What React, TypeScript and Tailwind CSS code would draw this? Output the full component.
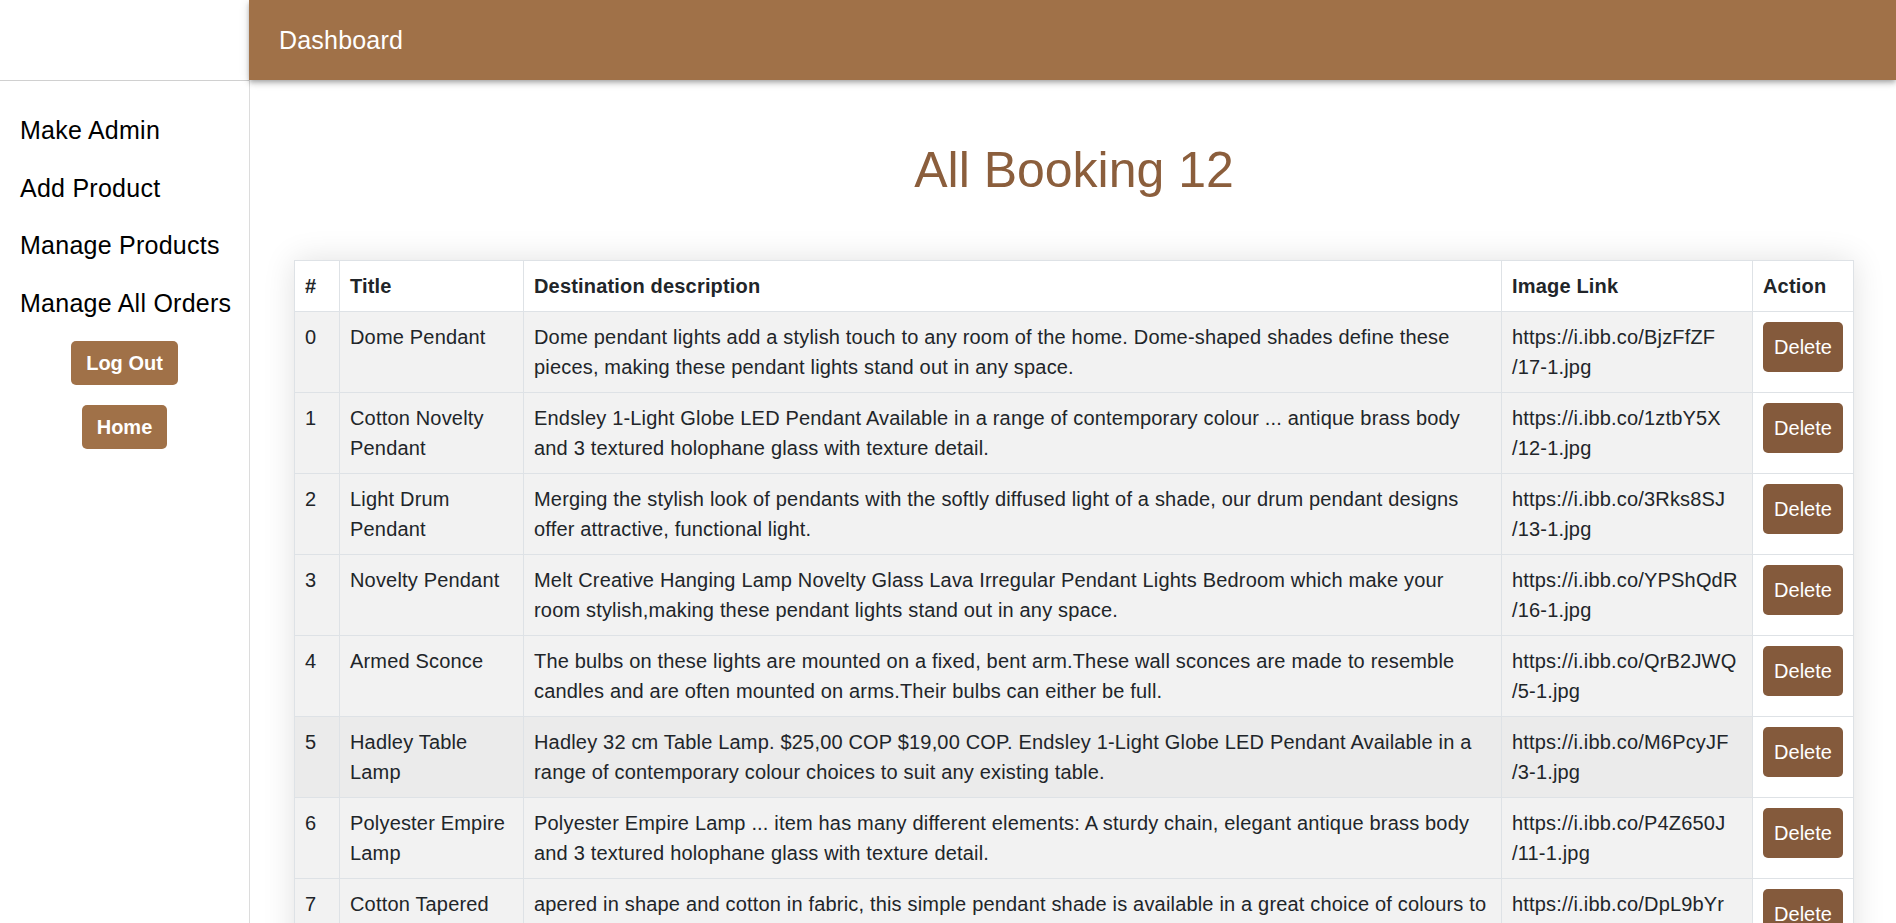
import React from 'react';

type Booking = {
  title: string;
  description: string;
  link: [string, string];
};

const bookings: Booking[] = [
  {
    title: 'Dome Pendant',
    description:
      'Dome pendant lights add a stylish touch to any room of the home. Dome-shaped shades define these pieces, making these pendant lights stand out in any space.',
    link: ['https://i.ibb.co/BjzFfZF', '/17-1.jpg'],
  },
  {
    title: 'Cotton Novelty Pendant',
    description:
      'Endsley 1-Light Globe LED Pendant Available in a range of contemporary colour ... antique brass body and 3 textured holophane glass with texture detail.',
    link: ['https://i.ibb.co/1ztbY5X', '/12-1.jpg'],
  },
  {
    title: 'Light Drum Pendant',
    description:
      'Merging the stylish look of pendants with the softly diffused light of a shade, our drum pendant designs offer attractive, functional light.',
    link: ['https://i.ibb.co/3Rks8SJ', '/13-1.jpg'],
  },
  {
    title: 'Novelty Pendant',
    description:
      'Melt Creative Hanging Lamp Novelty Glass Lava Irregular Pendant Lights Bedroom which make your room stylish,making these pendant lights stand out in any space.',
    link: ['https://i.ibb.co/YPShQdR', '/16-1.jpg'],
  },
  {
    title: 'Armed Sconce',
    description:
      'The bulbs on these lights are mounted on a fixed, bent arm.These wall sconces are made to resemble candles and are often mounted on arms.Their bulbs can either be full.',
    link: ['https://i.ibb.co/QrB2JWQ', '/5-1.jpg'],
  },
  {
    title: 'Hadley Table Lamp',
    description:
      'Hadley 32 cm Table Lamp. $25,00 COP $19,00 COP. Endsley 1-Light Globe LED Pendant Available in a range of contemporary colour choices to suit any existing table.',
    link: ['https://i.ibb.co/M6PcyJF', '/3-1.jpg'],
  },
  {
    title: 'Polyester Empire Lamp',
    description:
      'Polyester Empire Lamp ... item has many different elements: A sturdy chain, elegant antique brass body and 3 textured holophane glass with texture detail.',
    link: ['https://i.ibb.co/P4Z650J', '/11-1.jpg'],
  },
  {
    title: 'Cotton Tapered Pendant',
    description:
      'apered in shape and cotton in fabric, this simple pendant shade is available in a great choice of colours to suit any room of the home.',
    link: ['https://i.ibb.co/DpL9bYr', '/14-1.jpg'],
  },
  {
    title: 'Glass Globe Pendant',
    description:
      'Clear glass globe pendant with a brass finish, perfect for kitchens and dining areas where a soft, even glow is needed.',
    link: ['https://i.ibb.co/7KxQ2mV', '/15-1.jpg'],
  },
  {
    title: 'Rattan Floor Lamp',
    description:
      'Hand-woven rattan shade on a slim wooden base, giving a warm natural light to living rooms and bedrooms.',
    link: ['https://i.ibb.co/f4Ns0Gt', '/9-1.jpg'],
  },
  {
    title: 'Brass Wall Sconce',
    description:
      'A classic brass wall sconce with an opal glass shade that spreads light evenly along hallways and stairs.',
    link: ['https://i.ibb.co/Wn3hRq8', '/7-1.jpg'],
  },
  {
    title: 'Marble Desk Lamp',
    description:
      'Compact desk lamp with a marble base and adjustable metal head, made for reading and focused work.',
    link: ['https://i.ibb.co/Sd2kLpT', '/8-1.jpg'],
  },
];

const menu = ['Make Admin', 'Add Product', 'Manage Products', 'Manage All Orders'];

const cell = 'border border-[#dee2e6] px-[10px] py-[10px] align-top';

export default function App() {
  return (
    <div className="min-h-screen bg-white text-[#212529] font-['Liberation_Sans',Arial,sans-serif]">
      <div className="flex">
        {/* Sidebar */}
        <aside className="w-[250px] shrink-0 border-r border-[#dcdcdc] min-h-screen">
          <div className="h-[81px] border-b border-[#d0d0d0]"></div>
          <nav className="pt-[21px] flex flex-col">
            {menu.map((item) => (
              <a key={item} className="pl-[20px] text-[25px] leading-[57.5px] tracking-[0.25px] text-black cursor-pointer">
                {item}
              </a>
            ))}
          </nav>
          <div className="flex flex-col items-center gap-[20px] mt-[9px]">
            <button className="h-[44px] px-[15px] rounded-[5px] bg-[#a07148] text-white font-bold text-[20px]">
              Log Out
            </button>
            <button className="h-[44px] px-[15px] rounded-[5px] bg-[#a07148] text-white font-bold text-[20px]">
              Home
            </button>
          </div>
        </aside>

        {/* Main */}
        <div className="flex-1 min-w-0 -ml-px">
          <header className="h-[80px] bg-[#a07148] flex items-center px-[30px] shadow-[0_2px_4px_-1px_rgba(0,0,0,0.2),0_4px_5px_0_rgba(0,0,0,0.14),0_1px_10px_0_rgba(0,0,0,0.12)] relative z-10">
            <h6 className="text-white text-[25px] leading-none tracking-[0.2px]">Dashboard</h6>
          </header>

          <main className="pl-[45px] pr-[42px] pb-[40px]">
            <h1 className="text-center text-[#8b5e3c] text-[50px] leading-[60px] pt-[60px] pb-[60px]">
              All Booking 12
            </h1>

            <table className="w-[1559px] table-fixed border-collapse text-[20px] leading-[30px] tracking-[0.18px] shadow-[0_0_30px_rgba(0,0,0,0.12)]">
              <colgroup>
                <col className="w-[45px]" />
                <col className="w-[184px]" />
                <col className="w-[978px]" />
                <col className="w-[251px]" />
                <col className="w-[101px]" />
              </colgroup>
              <thead>
                <tr className="bg-white text-left">
                  <th className={cell}>#</th>
                  <th className={cell}>Title</th>
                  <th className={cell}>Destination description</th>
                  <th className={cell}>Image Link</th>
                  <th className={cell}>Action</th>
                </tr>
              </thead>
              <tbody>
                {bookings.map((b, i) => {
                  const bg = i === 5 ? 'bg-[#ebebeb]' : 'bg-[#f2f2f2]';
                  return (
                    <tr key={i}>
                      <td className={`${cell} ${bg}`}>{i}</td>
                      <td className={`${cell} ${bg}`}>{b.title}</td>
                      <td className={`${cell} ${bg}`}>{b.description}</td>
                      <td className={`${cell} ${bg}`}>
                        {b.link[0]}
                        <br />
                        {b.link[1]}
                      </td>
                      <td className={`${cell} bg-white`}>
                        <button className="block w-[80px] h-[50px] rounded-[5px] bg-[#845a3c] text-white text-[20px] tracking-normal">
                          Delete
                        </button>
                      </td>
                    </tr>
                  );
                })}
              </tbody>
            </table>
          </main>
        </div>
      </div>
    </div>
  );
}
